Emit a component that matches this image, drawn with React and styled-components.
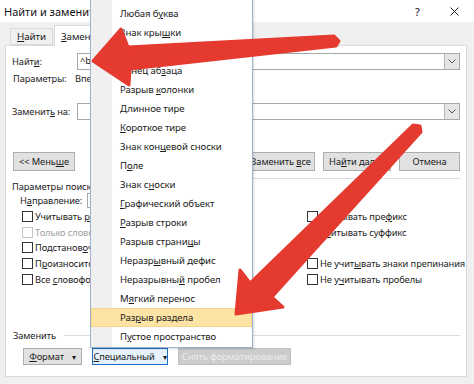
import React from "react";
import styled, { createGlobalStyle } from "styled-components";

const GlobalStyle = createGlobalStyle`
  html, body {
    margin: 0;
    padding: 0;
  }
  body {
    width: 474px;
    height: 384px;
    overflow: hidden;
    background: #f0f0f0;
    font-family: "Noto Sans", "Segoe UI", sans-serif;
  }
`;

const menuItems = [
  ["Любая ц", "и", "фра"],
  ["Любая б", "у", "ква"],
  ["Знак кры", "ш", "ки"],
  ["Знак раз", "д", "ела"],
  ["Конец аб", "з", "аца"],
  ["Разрыв ", "к", "олонки"],
  ["", "Д", "линное тире"],
  ["", "К", "ороткое тире"],
  ["Знак кон", "ц", "евой сноски"],
  ["П", "о", "ле"],
  ["Знак с", "н", "оски"],
  ["", "Г", "рафический объект"],
  ["", "Р", "азрыв строки"],
  ["Разрыв страни", "ц", "ы"],
  ["Неразр", "ы", "вный дефис"],
  ["Неразрывны", "й", " пробел"],
  ["М", "я", "гкий перенос"],
  ["Раз", "р", "ыв раздела"],
  ["П", "у", "стое пространство"],
];

const checks = [
  { left: ["Учитывать ", "р", "егистр"], right: ["Учитывать пре", "ф", "икс"] },
  { left: ["Только слово целиком", "", ""], disabled: true, right: ["У", "ч", "итывать суффикс"] },
  { left: ["Подстанов", "о", "чные знаки"], right: null },
  { left: ["П", "р", "оизносится как"], right: ["Не учит", "ы", "вать знаки препинания"] },
  { left: ["Все ", "с", "ловоформы"], right: ["Не у", "ч", "итывать пробелы"] },
];

function Key({ parts }) {
  return (
    <span>
      {parts[0]}
      {parts[1] && <u>{parts[1]}</u>}
      {parts[2]}
    </span>
  );
}

function Chevron() {
  return (
    <svg width="8" height="5" viewBox="0 0 8 5">
      <path d="M0.5 0.5 L4 4 L7.5 0.5" fill="none" stroke="#555" strokeWidth="1" />
    </svg>
  );
}

function Arrows() {
  return (
    <Overlay viewBox="0 0 474 384" width="474" height="384">
      <polygon
        points="93,61 121,29 128,47 334,36 339,41 336,46 130,69 129,85"
        fill="#e53a2f"
        stroke="#e53a2f"
        strokeWidth="3"
        strokeLinejoin="round"
      />
      <polygon
        points="236,314 240,270 250,283 413,125 420,126 421,132 272,297 283,307"
        fill="#e53a2f"
        stroke="#e53a2f"
        strokeWidth="3"
        strokeLinejoin="round"
      />
    </Overlay>
  );
}

export default function App() {
  return (
    <Window>
      <GlobalStyle />
      <TitleBar>
        <Title>Найти и заменить</Title>
        <Help>?</Help>
        <Close>
          <svg width="9" height="9" viewBox="0 0 9 9">
            <path d="M0.5 0.5 L8.5 8.5 M8.5 0.5 L0.5 8.5" stroke="#222" strokeWidth="1" />
          </svg>
        </Close>
      </TitleBar>
      <TabStrip>
        <Tab>
          <span>
            <u>Н</u>айти
          </span>
        </Tab>
        <Tab $active>
          <span>
            <u>З</u>аменить
          </span>
        </Tab>
      </TabStrip>
      <Panel>
        <FieldRow>
          <Label>
            Найт<u>и</u>:
          </Label>
          <Field>
            <FieldText>^b</FieldText>
            <DropButton>
              <Chevron />
            </DropButton>
          </Field>
        </FieldRow>
        <InfoRow>
          <span>Параметры:</span>
          <span>Вперед</span>
        </InfoRow>
        <FieldRow $top={18}>
          <Label>
            Заменит<u>ь</u> на:
          </Label>
          <Field>
            <FieldText />
            <DropButton>
              <Chevron />
            </DropButton>
          </Field>
        </FieldRow>
        <ButtonRow>
          <Button $w={62}>
            <span>
              &lt;&lt; Мень<u>ш</u>е
            </span>
          </Button>
          <ButtonGroup>
            <Button $w={68}>
              <span>
                <u>З</u>аменить
              </span>
            </Button>
            <Button $w={68}>
              <span>
                Заменить <u>в</u>се
              </span>
            </Button>
            <Button $w={68}>
              <span>
                На<u>й</u>ти далее
              </span>
            </Button>
            <Button $w={61}>
              <span>Отмена</span>
            </Button>
          </ButtonGroup>
        </ButtonRow>
        <GroupHeader>
          <GroupLabel>Параметры поиска</GroupLabel>
          <GroupLine $offset={4} />
        </GroupHeader>
        <DirectionRow>
          <span>
            Н<u>а</u>правление:
          </span>
          <Combo>
            <span>Везде</span>
            <Chevron />
          </Combo>
        </DirectionRow>
        <CheckGrid>
          {checks.map((row, i) => (
            <React.Fragment key={i}>
              <CheckItem $disabled={row.disabled}>
                <Box $disabled={row.disabled} />
                <Key parts={row.left} />
              </CheckItem>
              {row.right ? (
                <CheckItem>
                  <Box />
                  <Key parts={row.right} />
                </CheckItem>
              ) : (
                <span />
              )}
            </React.Fragment>
          ))}
        </CheckGrid>
        <ReplaceHeader>
          <GroupLabel $plain>Заменить</GroupLabel>
          <GroupLine $offset={6} />
        </ReplaceHeader>
        <BottomRow>
          <Button $w={59} $h={17}>
            <span>
              <u>Ф</u>ормат
            </span>
            <Caret>▾</Caret>
          </Button>
          <Button $w={76} $h={17} $focused>
            <span>
              <u>С</u>пециальный
            </span>
            <Caret>▾</Caret>
          </Button>
          <Button $w={113} $h={17} $disabled>
            <span>Снять форматирование</span>
          </Button>
        </BottomRow>
      </Panel>

      <Menu>
        {menuItems.map((item, i) => (
          <MenuItem key={i} $active={i === 17}>
            <Key parts={item} />
          </MenuItem>
        ))}
      </Menu>

      <Arrows />
    </Window>
  );
}

const Window = styled.div`
  position: relative;
  width: 474px;
  height: 384px;
  overflow: hidden;
  background: #f0f0f0;
  display: flex;
  flex-direction: column;
  font-size: 9.3px;
  letter-spacing: -0.1px;
  color: #1b1b1b;
`;

const TitleBar = styled.div`
  height: 22px;
  flex: none;
  display: flex;
  align-items: center;
  background: #fff;
  padding-left: 4px;
  font-size: 11px;
  letter-spacing: 0;
  color: #111;
`;

const Title = styled.div`
  flex: 1;
  margin-top: 1px;
`;

const Help = styled.div`
  width: 10px;
  margin-right: 25px;
  font-size: 11px;
`;

const Close = styled.div`
  display: flex;
  width: 9px;
  margin-right: 15px;
  margin-top: 1px;
`;

const TabStrip = styled.div`
  height: 23px;
  flex: none;
  display: flex;
  align-items: flex-end;
  padding-left: 10px;
  font-size: 9.8px;
`;

const Tab = styled.div`
  height: ${(p) => (p.$active ? 21 : 17)}px;
  display: flex;
  align-items: center;
  padding: 0 6px;
  margin-bottom: ${(p) => (p.$active ? -1 : 0)}px;
  background: ${(p) => (p.$active ? "#fff" : "#f0f0f0")};
  border: 1px solid #d9d9d9;
  border-bottom: ${(p) => (p.$active ? "none" : "1px solid #d9d9d9")};
  box-sizing: border-box;
  z-index: 1;
  & + & {
    margin-left: 1px;
  }
`;

const Panel = styled.div`
  height: 332px;
  margin: 0 7px 7px 5px;
  box-sizing: border-box;
  border: 1px solid #d9d9d9;
  background: #fff;
  padding: 7px 6px 0 6px;
  display: flex;
  flex-direction: column;
`;

const FieldRow = styled.div`
  display: flex;
  align-items: center;
  height: 17px;
  margin-top: ${(p) => p.$top || 0}px;
`;

const Label = styled.span`
  width: 65px;
  flex: none;
`;

const Field = styled.div`
  flex: 1;
  height: 17px;
  box-sizing: border-box;
  display: flex;
  border: 1px solid #a9a9a9;
  background: #fff;
`;

const FieldText = styled.div`
  flex: 1;
  padding-left: 2px;
  line-height: 14px;
`;

const DropButton = styled.div`
  width: 14px;
  flex: none;
  display: flex;
  align-items: center;
  justify-content: center;
  background: #e5e5e5;
  border-left: 1px solid #b5b5b5;
`;

const InfoRow = styled.div`
  display: flex;
  height: 13px;
  line-height: 13px;
  margin-top: 2px;
  margin-left: 1px;
  & > span:first-child {
    width: 62px;
  }
`;

const ButtonRow = styled.div`
  display: flex;
  justify-content: space-between;
  margin-top: 32px;
  padding-left: 1px;
`;

const ButtonGroup = styled.div`
  display: flex;
  gap: 8px;
`;

const Button = styled.div`
  width: ${(p) => p.$w}px;
  height: ${(p) => p.$h || 19}px;
  box-sizing: border-box;
  display: flex;
  align-items: center;
  justify-content: center;
  white-space: nowrap;
  background: ${(p) => (p.$disabled ? "#cccccc" : p.$focused ? "#e5f1fb" : "#e1e1e1")};
  border: 1px solid ${(p) => (p.$focused ? "#1f6fc9" : p.$disabled ? "#bfbfbf" : "#adadad")};
  color: ${(p) => (p.$disabled ? "#ececec" : "#1b1b1b")};
`;

const Caret = styled.span`
  margin-left: 8px;
  font-size: 8px;
`;

const GroupHeader = styled.div`
  display: flex;
  height: 19px;
  margin-top: 3px;
`;

const GroupLabel = styled.span`
  padding-top: ${(p) => (p.$plain ? 0 : 6)}px;
  line-height: 14px;
  white-space: nowrap;
  padding-left: ${(p) => (p.$plain ? 1 : 0)}px;
`;

const GroupLine = styled.div`
  flex: 1;
  height: 1px;
  margin-top: ${(p) => p.$offset}px;
  margin-left: 8px;
  background: #dcdcdc;
`;

const DirectionRow = styled.div`
  display: flex;
  align-items: center;
  height: 15px;
  padding-left: 8px;
  & > span {
    width: 67px;
  }
`;

const Combo = styled.div`
  width: 90px;
  height: 15px;
  box-sizing: border-box;
  border: 1px solid #a9a9a9;
  display: flex;
  align-items: center;
  justify-content: space-between;
  padding: 0 3px;
`;

const CheckGrid = styled.div`
  display: grid;
  grid-template-columns: 285px 1fr;
  grid-auto-rows: 15.6px;
  margin-top: 1px;
  padding-left: 10px;
`;

const CheckItem = styled.div`
  display: flex;
  align-items: center;
  gap: 2px;
  white-space: nowrap;
  color: ${(p) => (p.$disabled ? "#a0a0a0" : "#1b1b1b")};
`;

const Box = styled.span`
  width: 11px;
  height: 11px;
  box-sizing: border-box;
  border: 1px solid ${(p) => (p.$disabled ? "#c6c6c6" : "#333")};
  background: #fff;
  flex: none;
`;

const ReplaceHeader = styled.div`
  display: flex;
  height: 14px;
  margin-top: 42px;
`;

const BottomRow = styled.div`
  display: flex;
  gap: 10px;
  margin-top: 5px;
  padding-left: 11px;
`;

const Menu = styled.div`
  position: absolute;
  left: 90px;
  top: -16px;
  width: 163px;
  box-sizing: border-box;
  border: 1px solid #9fb2cc;
  padding-bottom: 1px;
  background: linear-gradient(to right, #f0f0f0 0 21px, #fff 21px);
  box-shadow: 1px 1px 2px rgba(0, 0, 0, 0.15);
  z-index: 5;
  font-size: 9.6px;
`;

const MenuItem = styled.div`
  height: 19px;
  box-sizing: border-box;
  display: flex;
  align-items: center;
  padding-left: 28px;
  white-space: nowrap;
  color: #1b1b1b;
  background: ${(p) => (p.$active ? "#fde4a5" : "transparent")};
  border: 1px solid ${(p) => (p.$active ? "#f6d48a" : "transparent")};
`;

const Overlay = styled.svg`
  position: absolute;
  left: 0;
  top: 0;
  pointer-events: none;
  z-index: 10;
`;
